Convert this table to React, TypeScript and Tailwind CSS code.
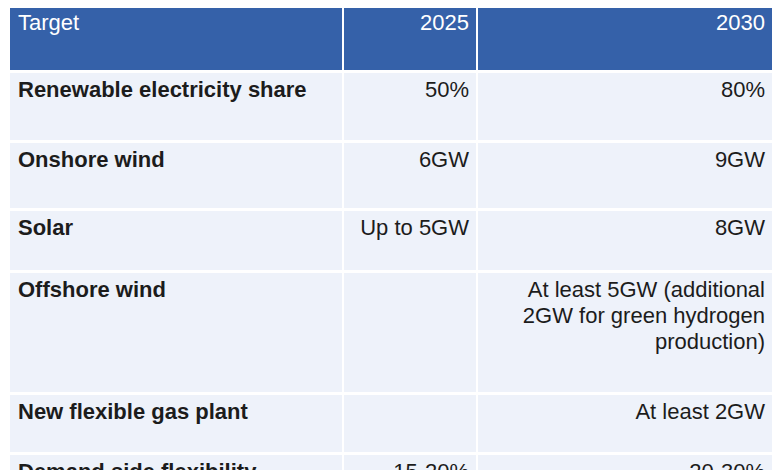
const rows = [
  { label: "Renewable electricity share", a: "50%", b: "80%", h: "h-[67px]" },
  { label: "Onshore wind", a: "6GW", b: "9GW", h: "h-[65px]" },
  { label: "Solar", a: "Up to 5GW", b: "8GW", h: "h-[59px]" },
  {
    label: "Offshore wind",
    a: "",
    b: "At least 5GW (additional 2GW for green hydrogen production)",
    h: "h-[119px]",
  },
  { label: "New flexible gas plant", a: "", b: "At least 2GW", h: "h-[57px]" },
  { label: "Demand side flexibility", a: "15-20%", b: "20-30%", h: "h-[60px]" },
]

export default function App() {
  return (
    <div
      className="w-[780px] h-[470px] overflow-hidden bg-white pl-[10px] pt-[8px]"
      style={{ fontFamily: '"Liberation Sans", Arial, sans-serif' }}
    >
      <div className="grid grid-cols-[332px_132px_294px] gap-x-[2px] gap-y-[3px] text-[22px] leading-[26px] text-[#1c1c1c]">
        <div className="h-[62px] bg-[#3561a9] text-white px-[8px] pt-[2px]">Target</div>
        <div className="h-[62px] bg-[#3561a9] text-white px-[7px] pt-[2px] text-right">2025</div>
        <div className="h-[62px] bg-[#3561a9] text-white px-[7px] pt-[2px] text-right">2030</div>
        {rows.map((r) => (
          <div key={r.label} className="contents">
            <div className={`${r.h} bg-[#eef2fa] px-[8px] pt-[4px] font-bold`}>{r.label}</div>
            <div className={`${r.h} bg-[#eef2fa] px-[7px] pt-[4px] text-right`}>{r.a}</div>
            <div className={`${r.h} bg-[#eef2fa] pl-[40px] pr-[7px] pt-[4px] text-right`}>{r.b}</div>
          </div>
        ))}
      </div>
    </div>
  )
}
